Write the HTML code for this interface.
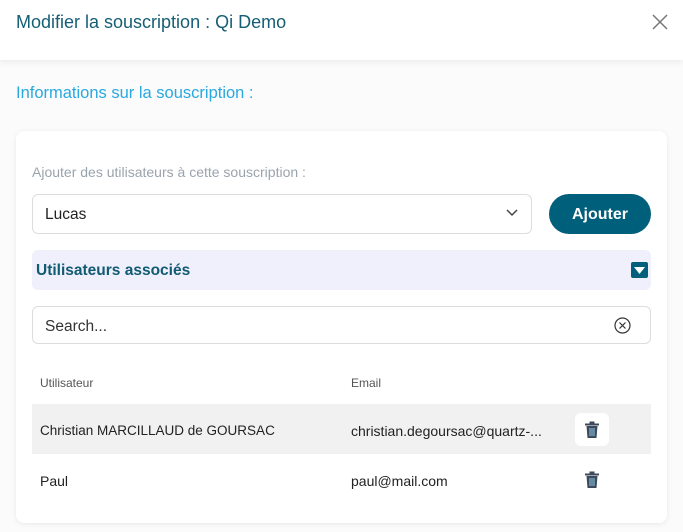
<!DOCTYPE html>
<html><head><meta charset="utf-8"><style>
*{box-sizing:border-box;margin:0;padding:0}
body{width:683px;height:532px;background:#fbfbfb;font-family:"Liberation Sans",Roboto,sans-serif;position:relative;overflow:hidden}
.hdr{position:absolute;left:0;top:0;width:683px;height:60px;background:#fff;box-shadow:0 2px 6px rgba(0,0,0,.07)}
.abs{position:absolute}
.card{position:absolute;left:16px;top:131px;width:651px;height:392px;background:#fff;border-radius:8px;box-shadow:0 1px 6px rgba(0,0,0,.08)}
</style></head><body>
<div class="hdr">
<div class="abs" style="left:16px;top:12px;font-size:18px;color:#155e75">Modifier la souscription : Qi Demo</div>
<svg class="abs" style="left:652px;top:14px" width="16" height="16" viewBox="0 0 16 16"><path d="M1 1L15 15M15 1L1 15" stroke="#777" stroke-width="1.5"/></svg>
</div>
<div class="abs" style="left:16px;top:84px;font-size:16.5px;color:#29a9e0">Informations sur la souscription :</div>
<div class="card"></div>
<div class="abs" style="left:32px;top:164px;font-size:14px;color:#9aa4ad">Ajouter des utilisateurs à cette souscription :</div>
<div class="abs" style="left:32px;top:194px;width:500px;height:40px;border:1px solid #ddd;border-radius:6px;background:#fff"></div>
<div class="abs" style="left:45px;top:206px;font-size:15.5px;color:#222">Lucas</div>
<svg class="abs" style="left:506px;top:209px" width="12" height="8" viewBox="0 0 12 8"><path d="M1 1L6 6L11 1" stroke="#444" stroke-width="1.5" fill="none"/></svg>
<div class="abs" style="left:549px;top:194px;width:102px;height:40px;border-radius:20px;background:#005f7a;color:#fff;font-weight:bold;font-size:16px;text-align:center;line-height:41px">Ajouter</div>
<div class="abs" style="left:32px;top:250px;width:619px;height:40px;border-radius:6px;background:#f0f0fc"></div>
<div class="abs" style="left:36px;top:262px;font-size:15.5px;font-weight:bold;color:#105a72">Utilisateurs associés</div>
<div class="abs" style="left:631px;top:262px;width:17px;height:16px;background:#005f7a;border-radius:2px"></div>
<svg class="abs" style="left:634px;top:267px" width="11" height="7"><path d="M0 0H11L5.5 7Z" fill="#fff"/></svg>
<div class="abs" style="left:32px;top:306px;width:619px;height:38px;border:1px solid #ddd;border-radius:6px;background:#fff"></div>
<div class="abs" style="left:45px;top:318px;font-size:15.5px;color:#333">Search...</div>
<svg class="abs" style="left:614px;top:317px" width="17" height="17" viewBox="0 0 17 17"><circle cx="8.5" cy="8.5" r="7.5" stroke="#333" stroke-width="1.2" fill="none"/><path d="M5.5 5.5L11.5 11.5M11.5 5.5L5.5 11.5" stroke="#333" stroke-width="1.2"/></svg>
<div class="abs" style="left:40px;top:376px;font-size:12px;color:#555">Utilisateur</div>
<div class="abs" style="left:351px;top:376px;font-size:12px;color:#555">Email</div>
<div class="abs" style="left:32px;top:404px;width:619px;height:50px;background:#f1f1f1"></div>
<div class="abs" style="left:40px;top:423px;font-size:13.5px;color:#222">Christian MARCILLAUD de GOURSAC</div>
<div class="abs" style="left:351px;top:423px;font-size:14px;color:#222">christian.degoursac@quartz-...</div>
<div class="abs" style="left:575px;top:413px;width:34px;height:33px;background:#fff;border-radius:6px"></div>
<div class="abs" style="left:40px;top:473px;font-size:14px;color:#222">Paul</div>
<div class="abs" style="left:351px;top:473px;font-size:14px;color:#222">paul@mail.com</div>
<svg class="abs" style="left:584px;top:421px" width="16" height="18" viewBox="0 0 16 18"><path d="M5.5 1.5H10.5M1 3.5H15" stroke="#3c4a5c" stroke-width="2"/><path d="M2.5 5H13.5L12.5 17H3.5Z" fill="#3c4a5c"/><path d="M6 7V15M8 7V15M10 7V15" stroke="#8ec9ea" stroke-width="1"/></svg>
<svg class="abs" style="left:584px;top:471px" width="16" height="18" viewBox="0 0 16 18"><path d="M5.5 1.5H10.5M1 3.5H15" stroke="#3c4a5c" stroke-width="2"/><path d="M2.5 5H13.5L12.5 17H3.5Z" fill="#3c4a5c"/><path d="M6 7V15M8 7V15M10 7V15" stroke="#8ec9ea" stroke-width="1"/></svg>
</body></html>
